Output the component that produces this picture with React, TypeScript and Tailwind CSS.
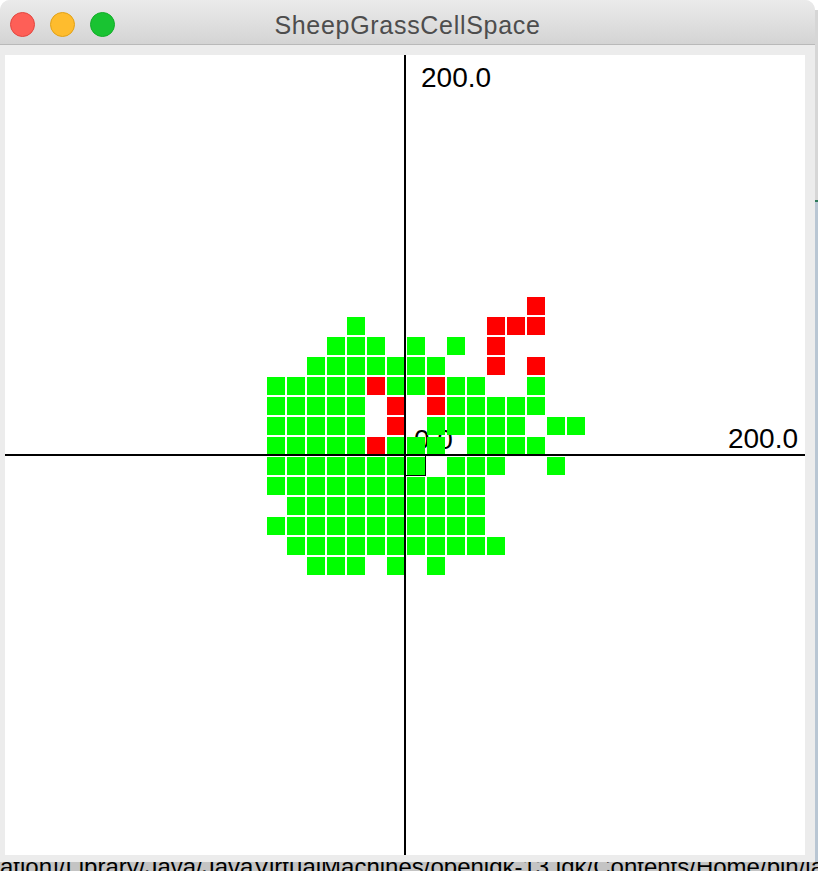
import React from "react";

// one string per row (y = -8 .. 5), one char per column (x = -7 .. 8)
const rows = [
  ".............r..",
  "....g......rrr..",
  "...ggg.g.g.r....",
  "..ggggggg..r.r..",
  "gggggrggrgg..g..",
  "ggggg.r.rggggg..",
  "ggggg.r.ggggg.gg",
  "gggggrggg.gggg..",
  "gggggggg.ggg..g.",
  "ggggggggggg.....",
  ".gggggggggg.....",
  "ggggggggggg.....",
  ".ggggggggggg....",
  "..ggg.g.g.......",
];

function cellColor(c: string) {
  if (c === "g") return "bg-[#00ff00]";
  if (c === "r") return "bg-[#ff0000]";
  return "";
}

function TitleBar() {
  return (
    <div className="grid grid-cols-[1fr_auto_1fr] items-center h-[45px] border-b border-[#b9b9b9] bg-gradient-to-b from-[#ebebeb] to-[#d4d4d4] rounded-t-[10px]">
      <div className="flex items-center gap-[15px] pl-[10px] pt-[4px]">
        <div className="w-[25px] h-[25px] rounded-full bg-[#fe5f57] border border-[#e2463f]" />
        <div className="w-[25px] h-[25px] rounded-full bg-[#febc2e] border border-[#e1a116]" />
        <div className="w-[25px] h-[25px] rounded-full bg-[#19c332] border border-[#12ac28]" />
      </div>
      <div className="text-[25px] tracking-[0.7px] text-[#4d4d4d] font-['Liberation_Sans',Arial,sans-serif] pt-[7px]">
        SheepGrassCellSpace
      </div>
      <div />
    </div>
  );
}

function CellSpace() {
  return (
    <div className="relative w-[800px] h-[800px] bg-white overflow-hidden font-['Liberation_Sans',Arial,sans-serif] text-black">
      <span className="absolute left-[409px] top-[371px] text-[28px] leading-none">0.0</span>
      <div className="absolute left-[260px] top-[240px] grid grid-cols-[repeat(16,20px)] grid-rows-[repeat(14,20px)]">
        {rows.map((row, y) =>
          row.split("").map((c, x) => (
            <div key={y + "-" + x} className={"ml-[2px] mt-[2px] w-[18px] h-[18px] " + cellColor(c)} />
          ))
        )}
      </div>
      <div className="absolute left-[400px] top-[400px] w-[21px] h-[21px] border border-black" />
      <div className="absolute left-[399px] top-0 w-[2px] h-[800px] bg-black" />
      <div className="absolute left-0 top-[399px] w-[800px] h-[2px] bg-black" />
      <span className="absolute left-[416px] top-[9px] text-[28px] leading-none">200.0</span>
      <span className="absolute right-[7px] top-[370px] text-[28px] leading-none">200.0</span>
    </div>
  );
}

export default function App() {
  return (
    <div className="w-[818px] h-[871px] bg-[#c4c4c4] flex flex-col overflow-hidden">
      <div className="flex h-[862px] shrink-0 bg-white">
        <div className="w-[815px] flex flex-col bg-[#ececec] rounded-t-[10px]">
          <TitleBar />
          <div className="pl-[5px] pt-[10px]">
            <CellSpace />
          </div>
        </div>
        <div className="w-[3px] flex flex-col">
          <div className="h-[10px] bg-white" />
          <div className="h-[190px] bg-[#d6d6d6]" />
          <div className="h-[2px] bg-[#2f7a5a]" />
          <div className="flex-1 bg-[#b9c6d3]" />
        </div>
      </div>
      <div className="h-[9px] overflow-hidden">
        <div className="-mt-[8px] whitespace-nowrap text-[24px] leading-[26px] text-black font-['Liberation_Sans',Arial,sans-serif]">
          ation]/Library/Java/JavaVirtualMachines/openjdk-13.jdk/Contents/Home/bin/ja
        </div>
      </div>
    </div>
  );
}
